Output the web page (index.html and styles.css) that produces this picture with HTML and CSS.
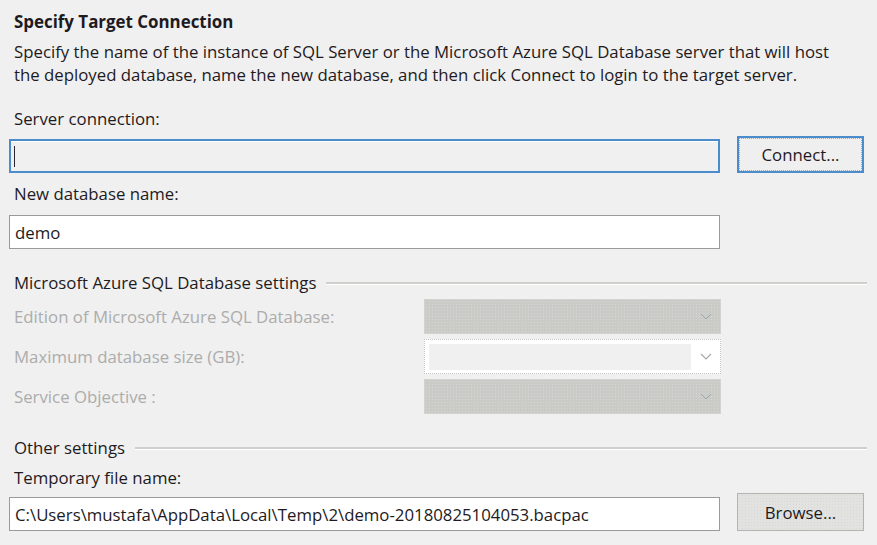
FILE: index.html
```html
<!DOCTYPE html>
<html>
<head>
<meta charset="utf-8">
<link rel="stylesheet" href="styles.css">
</head>
<body>
<div class="page">
  <div class="title">Specify Target Connection</div>
  <div class="desc">Specify the name of the instance of SQL Server or the Microsoft Azure SQL Database server that will host<br>the deployed database, name the new database, and then click Connect to login to the target server.</div>

  <div class="label lbl-server">Server connection:</div>
  <div class="row row-server">
    <div class="input input-focus"><span class="caret"></span></div>
    <div class="btn btn-focus">Connect...</div>
  </div>

  <div class="label lbl-newdb">New database name:</div>
  <div class="row">
    <div class="input input-white">demo</div>
  </div>

  <div class="group group-azure"><span>Microsoft Azure SQL Database settings</span><div class="rule"></div></div>
  <div class="grid">
    <div class="dlabel">Edition of Microsoft Azure SQL Database:</div>
    <div class="combo combo-dis"><svg class="chev" width="12" height="7" viewBox="0 0 12 7"><path d="M1 1 L6 6 L11 1" fill="none" stroke="#9aa6b4" stroke-width="1"/></svg></div>
    <div class="dlabel">Maximum database size (GB):</div>
    <div class="combo combo-white"><div class="combo-inner"></div><svg class="chev" width="12" height="7" viewBox="0 0 12 7"><path d="M1 1 L6 6 L11 1" fill="none" stroke="#a8a8a8" stroke-width="1.2"/></svg></div>
    <div class="dlabel">Service Objective :</div>
    <div class="combo combo-dis"><svg class="chev" width="12" height="7" viewBox="0 0 12 7"><path d="M1 1 L6 6 L11 1" fill="none" stroke="#9aa6b4" stroke-width="1"/></svg></div>
  </div>

  <div class="group group-other"><span>Other settings</span><div class="rule"></div></div>
  <div class="label lbl-temp">Temporary file name:</div>
  <div class="row row-path">
    <div class="input input-white">C:\Users\mustafa\AppData\Local\Temp\2\demo-20180825104053.bacpac</div>
    <div class="btn btn-gray">Browse...</div>
  </div>
</div>
</body>
</html>
```

FILE: styles.css
```css
html, body {
  margin: 0;
  padding: 0;
  background: #f0f0f0;
}
body {
  font-family: "Open Sans", "Noto Sans", sans-serif;
  font-size: 16.8px;
  color: #1e1a22;
  width: 877px;
  height: 545px;
  overflow: hidden;
}
.page {
  padding: 10px 10px 0 9px;
}
.title {
  padding-left: 5px;
  font-weight: 700;
  font-size: 16.9px;
  line-height: 24px;
}
.desc {
  padding-left: 5px;
  line-height: 23px;
  margin-top: 6px;
}
.label {
  padding-left: 5px;
  line-height: 22px;
}
.lbl-server { margin-top: 22px; }
.lbl-newdb { margin-top: 10px; }
.lbl-temp { margin-top: 8px; }
.row {
  display: flex;
  align-items: flex-end;
  gap: 17px;
}
.row-server { margin-top: 6px; }
.row-path { margin-top: 4px; }
.input {
  box-sizing: border-box;
  width: 711px;
  height: 34px;
  border: 1px solid #9c9a98;
  padding-left: 5px;
  display: flex;
  align-items: center;
  margin-top: 10px;
}
.row-server .input, .row-path .input { margin-top: 0; }
.input-white { background: #ffffff; }
.input-focus {
  border: 2px solid #4a8ccc;
  background: #f0f0f0;
  box-shadow: inset 0 1px 0 #ffffff;
  padding-left: 3px;
}
.caret {
  display: block;
  width: 1px;
  height: 21px;
  background: #2a2430;
}
.btn {
  box-sizing: border-box;
  width: 127px;
  height: 37px;
  display: flex;
  align-items: center;
  justify-content: center;
}
.btn-focus {
  border: 2px solid #4a8ccc;
  background: #efefef;
  outline: 1px dotted #8aaed0;
  outline-offset: -3px;
}
.btn-gray {
  height: 38px;
  border: 1px solid #b4b4b2;
  background-color: #e2e2e0;
  background-image: radial-gradient(#d8d8d6 0.6px, transparent 0.8px);
  background-size: 3px 3px;
}
.group {
  display: flex;
  align-items: center;
  padding-left: 5px;
  line-height: 22px;
}
.group span { white-space: nowrap; }
.group .rule {
  flex: 1;
  margin-left: 10px;
  height: 0;
  border-top: 2px solid #cfcfcc;
  border-bottom: 1px solid #ffffff;
}
.group-azure { margin-top: 23px; }
.group-other { margin-top: 23px; }
.grid {
  display: grid;
  grid-template-columns: 415px 297px;
  row-gap: 5px;
  margin-top: 5px;
  align-items: center;
}
.dlabel {
  padding-left: 5px;
  color: #acacac;
}
.combo {
  box-sizing: border-box;
  height: 35px;
  display: flex;
  align-items: center;
  justify-content: flex-end;
  padding-right: 8px;
}
.combo-dis {
  background-color: #cacac7;
  background-image: radial-gradient(#d6d6d4 0.6px, transparent 0.8px);
  background-size: 3px 3px;
  border: 1px solid #d2d2d0;
}
.combo-white {
  background: #ffffff;
  border: 1px dotted #c4c4c4;
  padding: 4px 8px 4px 4px;
  justify-content: space-between;
}
.combo-inner {
  width: 262px;
  height: 26px;
  background: #f0f0f0;
}
.chev { display: block; }
```
